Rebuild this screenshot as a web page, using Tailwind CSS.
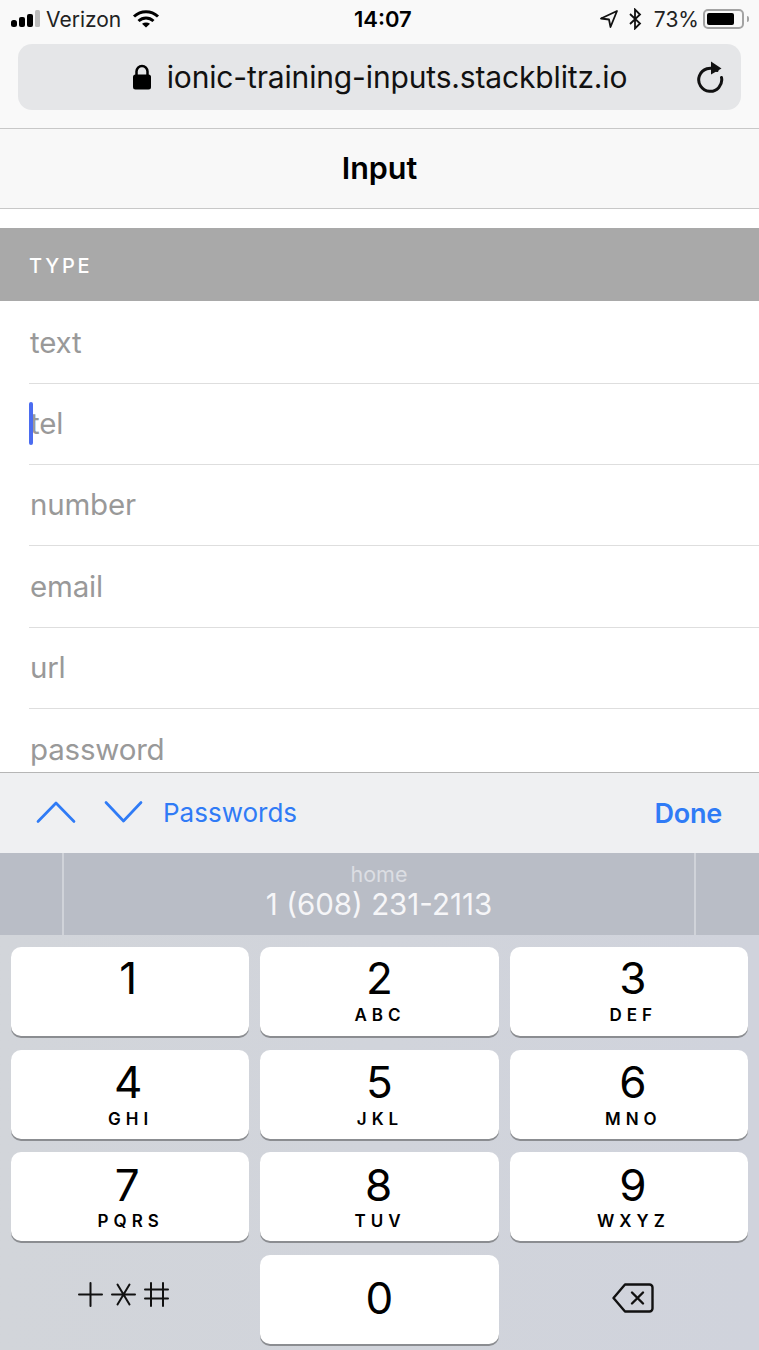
<!DOCTYPE html>
<html><head><meta charset="utf-8"><script src="https://cdn.jsdelivr.net/npm/@tailwindcss/browser@4"></script></head>
<body class="m-0">
<div class="w-[759px] h-[1350px] overflow-hidden flex flex-col bg-white font-['Inter','Liberation_Sans',sans-serif] text-black">
  <!-- browser chrome -->
  <div class="h-[129px] shrink-0 bg-[#f9f9f9] border-b border-[#c8c8c8] flex flex-col">
    <div class="h-[38px] shrink-0 relative flex items-center justify-between pl-[11px] pr-[10px]">
      <div class="flex items-center">
        <svg width="30" height="20" viewBox="0 0 30 20" class="mr-[5px]"><rect x="0" y="11" width="6" height="7" rx="2.5" fill="#000"/><rect x="8" y="8" width="6" height="10" rx="2" fill="#000"/><rect x="16" y="5" width="6" height="13" rx="2" fill="#000"/><rect x="24" y="1" width="5" height="17" rx="1.5" fill="#bdbdbd"/></svg>
        <span class="text-[21px] leading-none text-[#222]">Verizon</span>
        <svg width="28" height="20" viewBox="0 0 28 20" class="ml-[11px]" fill="none" stroke="#000" stroke-width="3"><path d="M2 7.5C9 1 19 1 26 7.5"/><path d="M6.5 12C11 8 17 8 21.500 12"/><path d="M14 18.500L10 14.800C12.500 13 15.500 13 18 14.800Z" fill="#000" stroke="none"/></svg>
      </div>
      <span class="absolute left-[354px] top-[7px] text-[22px] leading-[24px] font-semibold">14:07</span>
      <div class="flex items-center">
        <svg width="20" height="20" viewBox="0 0 20 20" fill="none" stroke="#111" stroke-width="1.800" stroke-linejoin="round" class="mr-[9px]"><path d="M18 2L2 9.500L10 10.500L11.500 18Z"/></svg>
        <svg width="14" height="22" viewBox="0 0 14 22" fill="none" stroke="#111" stroke-width="1.800" class="mr-[12px]"><path d="M2 6L12 15.500L7 20.500V1.500L12 6.500L2 16"/></svg>
        <span class="text-[21px] leading-none text-[#222]">73%</span>
        <div class="ml-[4px] w-[41px] h-[20px] rounded-[5px] border-2 border-[#a3a3a3] p-[2px]"><div class="w-[27px] h-full bg-black rounded-[2px]"></div></div>
        <div class="ml-[3px] w-[2px] h-[6px] bg-[#a3a3a3] rounded-r-sm"></div>
      </div>
    </div>
    <div class="mt-[6px] mx-[18px] h-[66px] rounded-[14px] bg-[#e5e6e8] relative flex items-center justify-center">
      <svg width="20" height="26" viewBox="0 0 20 26" class="mr-[15px] mb-[1px]"><path d="M4.500 12V7.500a5.500 5.500 0 0 1 11 0V12" fill="none" stroke="#000" stroke-width="2.500"/><rect x="1" y="10.500" width="18" height="15" rx="2.500" fill="#000"/></svg>
      <span class="text-[30px] leading-none tracking-[-0.15px] text-[#111]">ionic-training-inputs.stackblitz.io</span>
      <svg width="30" height="34" viewBox="0 0 30 34" fill="none" class="absolute right-[15px] top-[16px]"><path d="M21 10.500A11.500 11.500 0 1 0 25.500 17.500" stroke="#111" stroke-width="3" stroke-linecap="round"/><path d="M15 1.500L25.500 8.500L15 14.500Z" fill="#111"/></svg>
    </div>
  </div>
  <!-- app header -->
  <div class="h-[80px] shrink-0 bg-[#f8f8f8] border-b border-[#c8c8c8] flex items-center justify-center">
    <span class="text-[30.5px] leading-none font-semibold">Input</span>
  </div>
  <!-- content -->
  <div class="h-[563px] shrink-0 overflow-hidden bg-white pt-[19px]">
    <div class="h-[73px] bg-[#a9a9a9] flex items-center pl-[29px] pt-[2px] text-white text-[20px] font-medium tracking-[2.800px]">TYPE</div>
    <div class="pl-[29px] text-[29.5px] leading-none tracking-[-0.2px] text-[#999]">
      <div class="h-[83px] pl-[1px] pt-[2px] border-b border-[#dedede] flex items-center">text</div>
      <div class="h-[81px] pl-[1px] border-b border-[#dedede] flex items-center relative">tel<span class="absolute left-0 top-[18px] w-[4px] h-[43px] rounded-full bg-[#4b6cf0]"></span></div>
      <div class="h-[81px] pl-[1px] border-b border-[#dedede] flex items-center">number</div>
      <div class="h-[82px] pl-[1px] border-b border-[#dedede] flex items-center">email</div>
      <div class="h-[81px] pl-[1px] border-b border-[#dedede] flex items-center">url</div>
      <div class="h-[81px] pl-[1px] flex items-center">password</div>
    </div>
  </div>
  <!-- keyboard accessory -->
  <div class="h-[81px] shrink-0 bg-[#eff0f2] border-t border-[#b6b6b6] flex items-center pl-[36px] pr-[37px] text-[#2f7bf6]">
    <svg width="40" height="24" viewBox="0 0 40 24" fill="none" stroke="#2f7bf6" stroke-width="2.700" stroke-linecap="round" stroke-linejoin="round" class="mb-[2px]"><path d="M2 21.500L20 3L38 21.500" /></svg>
    <svg width="40" height="24" viewBox="0 0 40 24" fill="none" stroke="#2f7bf6" stroke-width="2.700" stroke-linecap="round" stroke-linejoin="round" class="ml-[28px] mb-[2px]"><path d="M2 2.500L19.500 21L37 2.500"/></svg>
    <span class="ml-[19px] text-[26px] leading-none mb-[1px]">Passwords</span>
    <span class="ml-auto text-[27px] leading-none tracking-[-0.2px] font-semibold">Done</span>
  </div>
  <!-- contact suggestion -->
  <div class="h-[82px] shrink-0 bg-[#b9bdc6] flex text-white">
    <div class="w-[64px] border-r-2 border-[#d0d3d9]"></div>
    <div class="w-[632px] border-r-2 border-[#d0d3d9] flex flex-col items-center pt-[9px]">
      <span class="text-[21.5px] leading-[24px] text-[#dcdee3]">home</span>
      <span class="text-[29.5px] leading-[36px] text-[#f6f6f8]">1 (608) 231-2113</span>
    </div>
  </div>
  <!-- keypad -->
  <div class="flex-1 bg-linear-to-r from-[#d2d5da] to-[#d0d3dc] pt-[12px] px-[11px] grid grid-cols-3 gap-x-[11px] gap-y-[13.7px] auto-rows-[89px]">
    <div class="rounded-[10px] bg-white shadow-[0_2px_0_#8b8d91] flex flex-col items-center pt-[6px]"><span class="text-[44px] leading-[50px] mr-[4px]">1</span></div>
    <div class="rounded-[10px] bg-white shadow-[0_2px_0_#8b8d91] flex flex-col items-center pt-[6px]"><span class="text-[44px] leading-[50px]">2</span><span class="text-[17px] leading-[18px] font-semibold tracking-[5px] mt-[3px] ml-[1px]">ABC</span></div>
    <div class="rounded-[10px] bg-white shadow-[0_2px_0_#8b8d91] flex flex-col items-center pt-[6px] pl-[8px]"><span class="text-[44px] leading-[50px]">3</span><span class="text-[17px] leading-[18px] font-semibold tracking-[5px] mt-[3px] ml-[1px]">DEF</span></div>
    <div class="rounded-[10px] bg-white shadow-[0_2px_0_#8b8d91] flex flex-col items-center pt-[7px]"><span class="text-[44px] leading-[50px] mr-[4px]">4</span><span class="text-[17px] leading-[18px] font-semibold tracking-[5px] mt-[3px] ml-[1px]">GHI</span></div>
    <div class="rounded-[10px] bg-white shadow-[0_2px_0_#8b8d91] flex flex-col items-center pt-[7px]"><span class="text-[44px] leading-[50px]">5</span><span class="text-[17px] leading-[18px] font-semibold tracking-[5px] mt-[3px] ml-[1px]">JKL</span></div>
    <div class="rounded-[10px] bg-white shadow-[0_2px_0_#8b8d91] flex flex-col items-center pt-[7px] pl-[8px]"><span class="text-[44px] leading-[50px]">6</span><span class="text-[17px] leading-[18px] font-semibold tracking-[5px] mt-[3px] ml-[1px]">MNO</span></div>
    <div class="rounded-[10px] bg-white shadow-[0_2px_0_#8b8d91] flex flex-col items-center pt-[8px]"><span class="text-[44px] leading-[50px] mr-[6px]">7</span><span class="text-[17px] leading-[18px] font-semibold tracking-[5px] mt-[2px] ml-[1px]">PQRS</span></div>
    <div class="rounded-[10px] bg-white shadow-[0_2px_0_#8b8d91] flex flex-col items-center pt-[8px]"><span class="text-[44px] leading-[50px] mr-[2px]">8</span><span class="text-[17px] leading-[18px] font-semibold tracking-[5px] mt-[2px] ml-[1px]">TUV</span></div>
    <div class="rounded-[10px] bg-white shadow-[0_2px_0_#8b8d91] flex flex-col items-center pt-[8px] pl-[8px]"><span class="text-[44px] leading-[50px]">9</span><span class="text-[17px] leading-[18px] font-semibold tracking-[5px] mt-[2px] ml-[1px]">WXYZ</span></div>
    <div class="flex items-center justify-center pb-[10px] pr-[13px]">
      <svg width="89" height="23" viewBox="0 0 89 23" fill="none" stroke="#111" stroke-width="2" stroke-linecap="round" overflow="visible"><path d="M0 11.500H23M11.500 0V23"/><path d="M33 11.500H56M38.500 1.500L50.500 21.500M50.500 1.500L38.500 21.500"/><path d="M66 6.500H89M66 15.500H89M72 0V23M84 0V23"/></svg>
    </div>
    <div class="rounded-[10px] bg-white shadow-[0_2px_0_#8b8d91] flex items-center justify-center pb-[3px]"><span class="text-[44px] leading-[50px]">0</span></div>
    <div class="flex items-center justify-center pb-[4px] pl-[8px]">
      <svg width="42" height="30" viewBox="0 0 42 30" fill="none" stroke="#111" stroke-width="2.400" stroke-linejoin="round" stroke-linecap="round"><path d="M13 1.500H37.500a3 3 0 0 1 3 3V25.500a3 3 0 0 1 -3 3H13L1.500 15Z"/><path d="M20 9.500L31 20.500M31 9.500L20 20.500"/></svg>
    </div>
  </div>
</div>
</body></html>
